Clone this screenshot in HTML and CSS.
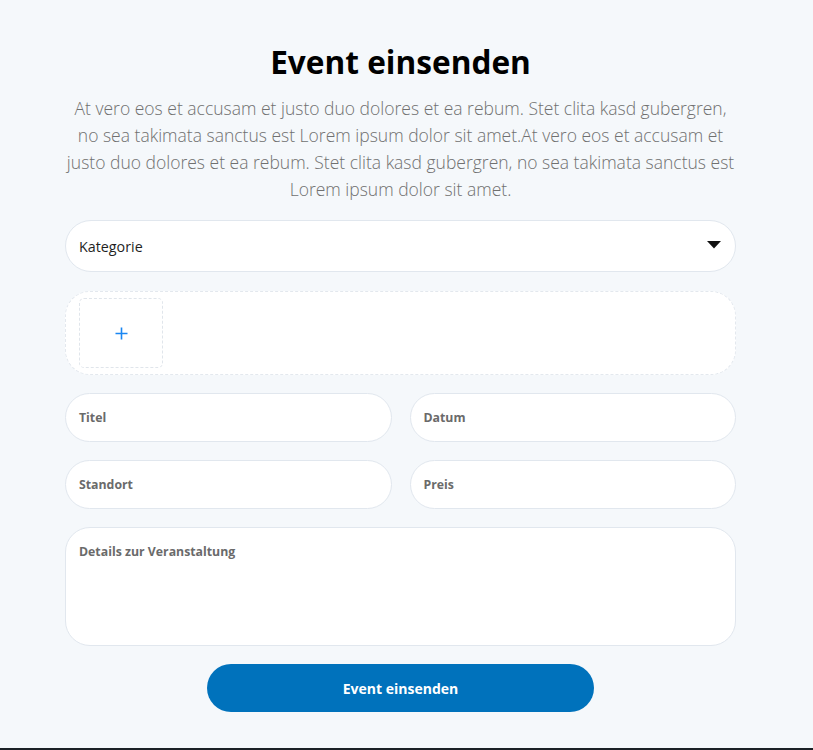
FILE: index.html
```html
<!DOCTYPE html>
<html lang="de">
<head>
<meta charset="utf-8">
<link rel="stylesheet" href="styles.css">
</head>
<body>
<main class="page">
  <h1 class="title">Event einsenden</h1>
  <p class="intro">At vero eos et accusam et justo duo dolores et ea rebum. Stet clita kasd gubergren, no sea takimata sanctus est Lorem ipsum dolor sit amet.At vero eos et accusam et justo duo dolores et ea rebum. Stet clita kasd gubergren, no sea takimata sanctus est Lorem ipsum dolor sit amet.</p>
  <form class="form">
    <div class="select">
      <span class="select-text">Kategorie</span>
      <svg class="caret" width="14" height="8" viewBox="0 0 14 8"><path d="M0 0H14L7 7.5Z" fill="#111"/></svg>
    </div>
    <div class="upload">
      <div class="upload-tile">
        <svg width="13" height="13" viewBox="0 0 13 13"><path d="M6.5 0.5V12.5M0.5 6.5H12.5" stroke="#1a86f2" stroke-width="1.6"/></svg>
      </div>
    </div>
    <div class="row">
      <div class="field">Titel</div>
      <div class="field">Datum</div>
    </div>
    <div class="row">
      <div class="field">Standort</div>
      <div class="field">Preis</div>
    </div>
    <div class="field area">Details zur Veranstaltung</div>
    <div class="actions">
      <button type="button" class="submit">Event einsenden</button>
    </div>
  </form>
</main>
<div class="bottom-line"></div>
</body>
</html>
```

FILE: styles.css
```css
html, body {
  margin: 0;
  padding: 0;
}
body {
  background: #f5f8fb;
  font-family: "Open Sans", "Noto Sans", sans-serif;
  height: 750px;
  position: relative;
  overflow: hidden;
}
.page {
  width: 671px;
  margin-left: 65px;
  padding-top: 39px;
  display: flex;
  flex-direction: column;
  align-items: stretch;
}
.title {
  margin: 0;
  text-align: center;
  font-size: 31.6px;
  font-weight: 700;
  line-height: 46px;
  color: #000;
}
.intro {
  margin: 10px 0 0;
  text-align: center;
  font-size: 17.5px;
  font-weight: 300;
  line-height: 27px;
  color: #707070;
}
.form {
  margin-top: 17px;
  display: flex;
  flex-direction: column;
  gap: 18px;
}
.select {
  height: 52px;
  box-sizing: border-box;
  border: 1px solid #e1e7ee;
  border-radius: 26px;
  background: #fff;
  display: flex;
  align-items: center;
  justify-content: space-between;
  padding: 0 14px 0 13px;
  margin-bottom: 1px;
}
.select-text {
  font-size: 14.3px;
  color: #1f1f1f;
}
.caret {
  display: block;
  margin-top: -2px;
}
.upload {
  height: 84px;
  box-sizing: border-box;
  border: 1px dashed #e3e8ee;
  border-radius: 25px;
  background: #fff;
  padding: 6px 13px;
  display: flex;
  align-items: center;
}
.upload-tile {
  width: 84px;
  height: 70px;
  box-sizing: border-box;
  border: 1px dashed #e0e5eb;
  border-radius: 5px;
  display: flex;
  align-items: center;
  justify-content: center;
}
.upload-tile svg {
  display: block;
}
.row {
  display: grid;
  grid-template-columns: 1fr 1fr;
  gap: 18px;
}
.field {
  height: 49px;
  box-sizing: border-box;
  border: 1px solid #e1e7ee;
  border-radius: 25px;
  background: #fff;
  padding: 0 13px;
  display: flex;
  align-items: center;
  font-size: 12.3px;
  font-weight: 700;
  color: #6a6a6a;
}
.field.area {
  height: 119px;
  align-items: flex-start;
  padding-top: 15px;
}
.actions {
  display: flex;
  justify-content: center;
}
.submit {
  width: 387px;
  height: 48px;
  border: none;
  border-radius: 24px;
  background: #0072bc;
  color: #fff;
  font-family: "Open Sans", "Noto Sans", sans-serif;
  font-size: 14px;
  font-weight: 700;
  cursor: pointer;
}
.bottom-line {
  position: absolute;
  left: 0;
  right: 0;
  bottom: 0;
  height: 2px;
  background: #1b2126;
}
```
